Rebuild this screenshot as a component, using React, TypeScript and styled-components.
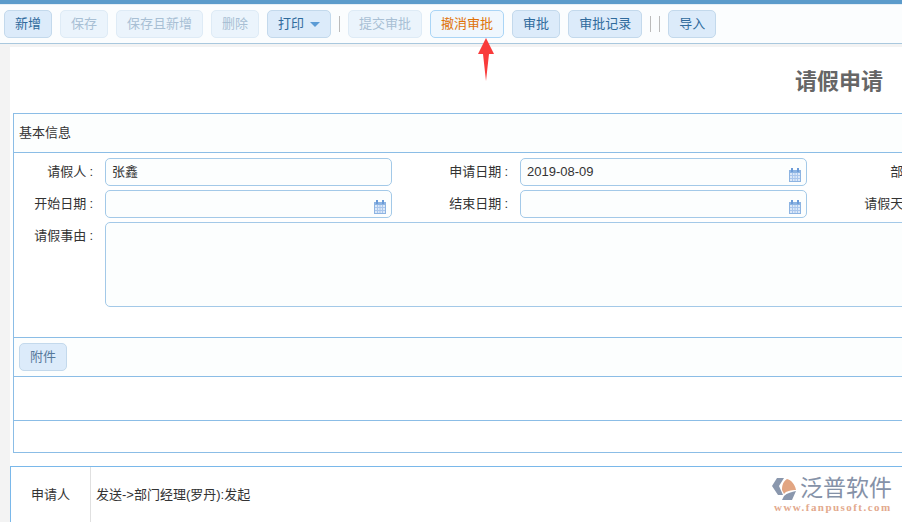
import React from "react";
import styled, { createGlobalStyle } from "styled-components";

const GlobalStyle = createGlobalStyle`
  html, body {
    margin: 0;
    padding: 0;
    height: 522px;
    overflow: hidden;
    background: #f3f3f3;
    font-family: "Liberation Sans", "Noto Sans CJK SC", sans-serif;
    font-size: 13px;
    color: #333;
  }
`;

const Page = styled.div`
  position: relative;
  width: 902px;
  height: 522px;
  overflow: hidden;
`;

const TopBar = styled.div`
  height: 4px;
  background: #5b9bcb;
`;

const Toolbar = styled.div`
  display: flex;
  align-items: center;
  gap: 8px;
  height: 40px;
  padding: 0 0 0 4px;
  box-sizing: border-box;
  background: #fbfdfe;
  border-top: 1px solid #e6eff6;
  border-bottom: 1px solid #a9c8de;
  margin-bottom: 3px;
`;

const Button = styled.button<{ $kind?: "normal" | "off" | "hot" }>`
  box-sizing: border-box;
  flex: none;
  height: 28px;
  padding: 0 10px;
  border-radius: 5px;
  font: inherit;
  line-height: 26px;
  border: 1px solid
    ${(p) => (p.$kind === "off" ? "#deebf6" : p.$kind === "hot" ? "#aad5f6" : "#c3d9ec")};
  background: ${(p) => (p.$kind === "off" ? "#ebf4fc" : p.$kind === "hot" ? "#eff7fe" : "#dcebfa")};
  color: ${(p) => (p.$kind === "off" ? "#a8bfd4" : p.$kind === "hot" ? "#df7208" : "#2f6a9c")};
`;

const Caret = styled.span`
  display: inline-block;
  margin-left: 6px;
  vertical-align: 1px;
  border-left: 5px solid transparent;
  border-right: 5px solid transparent;
  border-top: 5px solid #5b9bd5;
`;

const Separator = styled.span`
  flex: none;
  width: 1px;
  height: 16px;
  background: #bbbbbb;
`;

const Sheet = styled.div`
  box-sizing: border-box;
  margin-left: 10px;
  width: 1660px;
  height: 480px;
  padding: 0 3px;
  background: #fff;
`;

const Title = styled.h1`
  margin: 0 2px 0 0;
  height: 66px;
  padding-top: 19px;
  box-sizing: border-box;
  text-align: center;
  font-size: 22px;
  line-height: 32px;
  font-weight: 700;
  color: #666;
`;

const FormBox = styled.div`
  box-sizing: border-box;
  height: 340px;
  border: 1px solid #8bbde6;
`;

const SectionHead = styled.div`
  box-sizing: border-box;
  display: flex;
  align-items: center;
  height: 39px;
  padding: 0 0 4px 5px;
  background: #fcfefe;
  border-bottom: 1px solid #8bbde6;
  color: #333;
`;

const Fields = styled.div`
  box-sizing: border-box;
  height: 185px;
  padding-top: 5px;
  display: grid;
  grid-template-columns: 91px 287px 128px 287px 128px 287px;
  grid-auto-rows: 28px;
  row-gap: 4px;
  align-content: start;
  border-bottom: 1px solid #8bbde6;
`;

const Label = styled.label`
  box-sizing: border-box;
  padding-right: 12px;
  text-align: right;
  line-height: 27px;
  white-space: nowrap;
`;

const Colon = styled.span`
  margin-left: 3px;
`;

const Field = styled.div`
  box-sizing: border-box;
  position: relative;
  height: 28px;
  padding-left: 6px;
  line-height: 25px;
  color: #333;
  background: #fcfefe;
  border: 1px solid #a3c9e8;
  border-radius: 5px;
`;

const NoteField = styled(Field)`
  grid-column: 2 / 7;
  height: 85px;
`;

const CalendarSlot = styled.span`
  position: absolute;
  top: 6px;
  right: 5px;
  width: 12px;
  height: 14px;
`;

const AttachRow = styled(SectionHead)`
  padding: 0 0 0 5px;
`;

const AttachButton = styled(Button)`
  color: #55789a;
`;

const EmptyRow = styled.div<{ $h: number }>`
  box-sizing: border-box;
  height: ${(p) => p.$h}px;
  border-bottom: 1px solid #8bbde6;
  &:last-child {
    border-bottom: 0;
  }
`;

const FlowTable = styled.div`
  box-sizing: border-box;
  display: flex;
  width: 1660px;
  height: 60px;
  margin: 13px 0 0 -3px;
  border: 1px solid #7ab8ea;
  border-bottom: 0;
  background: #fff;
`;

const FlowName = styled.div`
  box-sizing: border-box;
  flex: none;
  width: 80px;
  padding-top: 18px;
  text-align: center;
  line-height: 20px;
  border-right: 1px solid #e0e0e0;
`;

const FlowText = styled.div`
  padding: 18px 0 0 5px;
  line-height: 20px;
`;

const ArrowMark = styled.svg`
  position: absolute;
  left: 476px;
  top: 37px;
`;

const Logo = styled.div`
  position: absolute;
  left: 772px;
  top: 475px;
  display: grid;
  grid-template-columns: 28px auto;
  width: 122px;
`;

const LogoName = styled.span`
  font-size: 23px;
  line-height: 27px;
  white-space: nowrap;
  color: #8592a8;
`;

const LogoUrl = styled.span`
  grid-column: 1 / 3;
  margin-top: -1px;
  padding-left: 2px;
  font-family: "Liberation Serif", serif;
  font-weight: 700;
  font-size: 11px;
  line-height: 12px;
  letter-spacing: 1.45px;
  white-space: nowrap;
  color: #e3a98d;
`;

const Calendar = () => (
  <CalendarSlot>
    <svg width="12" height="14" viewBox="0 0 12 14">
      <rect x="0.5" y="2.5" width="11" height="11" fill="#dbe8f8" stroke="#8db4e2" />
      <rect x="0" y="2" width="12" height="3" fill="#8db4e2" />
      <rect x="2" y="0" width="2" height="4" fill="#6b9bd8" />
      <rect x="8" y="0" width="2" height="4" fill="#6b9bd8" />
      <path d="M3.5 5v8M6 5v8M8.5 5v8M1 7.5h10M1 10.5h10" stroke="#a9c6ec" strokeWidth="1" />
    </svg>
  </CalendarSlot>
);

const FieldLabel = ({ text }: { text: string }) => (
  <Label>
    {text}
    <Colon>:</Colon>
  </Label>
);

export default function App() {
  return (
    <Page>
      <GlobalStyle />
      <TopBar />
      <Toolbar>
        <Button>新增</Button>
        <Button $kind="off">保存</Button>
        <Button $kind="off">保存且新增</Button>
        <Button $kind="off">删除</Button>
        <Button>
          打印
          <Caret />
        </Button>
        <Separator />
        <Button $kind="off">提交审批</Button>
        <Button $kind="hot">撤消审批</Button>
        <Button>审批</Button>
        <Button>审批记录</Button>
        <Separator />
        <Separator />
        <Button>导入</Button>
      </Toolbar>

      <Sheet>
        <Title>请假申请</Title>
        <FormBox>
          <SectionHead>基本信息</SectionHead>
          <Fields>
            <FieldLabel text="请假人" />
            <Field>张鑫</Field>
            <FieldLabel text="申请日期" />
            <Field>
              2019-08-09
              <Calendar />
            </Field>
            <FieldLabel text="部门" />
            <Field />
            <FieldLabel text="开始日期" />
            <Field>
              <Calendar />
            </Field>
            <FieldLabel text="结束日期" />
            <Field>
              <Calendar />
            </Field>
            <FieldLabel text="请假天数" />
            <Field />
            <FieldLabel text="请假事由" />
            <NoteField />
          </Fields>
          <AttachRow>
            <AttachButton>附件</AttachButton>
          </AttachRow>
          <EmptyRow $h={44} />
          <EmptyRow $h={32} />
        </FormBox>
        <FlowTable>
          <FlowName>申请人</FlowName>
          <FlowText>发送-&gt;部门经理(罗丹):发起</FlowText>
        </FlowTable>
      </Sheet>

      <ArrowMark width="20" height="46" viewBox="0 0 20 46">
        <polygon points="10,1 18,17 13,17 10,44 7,17 2,17" fill="#f93b3b" />
      </ArrowMark>

      <Logo>
        <svg width="26" height="26" viewBox="0 0 26 26">
          <path d="M0 11 L5 3 L12 3 L7 11 L11 20 L6 20 Z" fill="#8a97ad" />
          <path d="M10 15 C10 9 12 6 15 4 C19 5 23 9 24 15 C19 15 14 16 12 19 Z" fill="#e2a582" />
          <path d="M12 21 C15 18 20 17 24 16 L20 25 L10 25 Z" fill="#8a97ad" />
        </svg>
        <LogoName>泛普软件</LogoName>
        <LogoUrl>www.fanpusoft.com</LogoUrl>
      </Logo>
    </Page>
  );
}
